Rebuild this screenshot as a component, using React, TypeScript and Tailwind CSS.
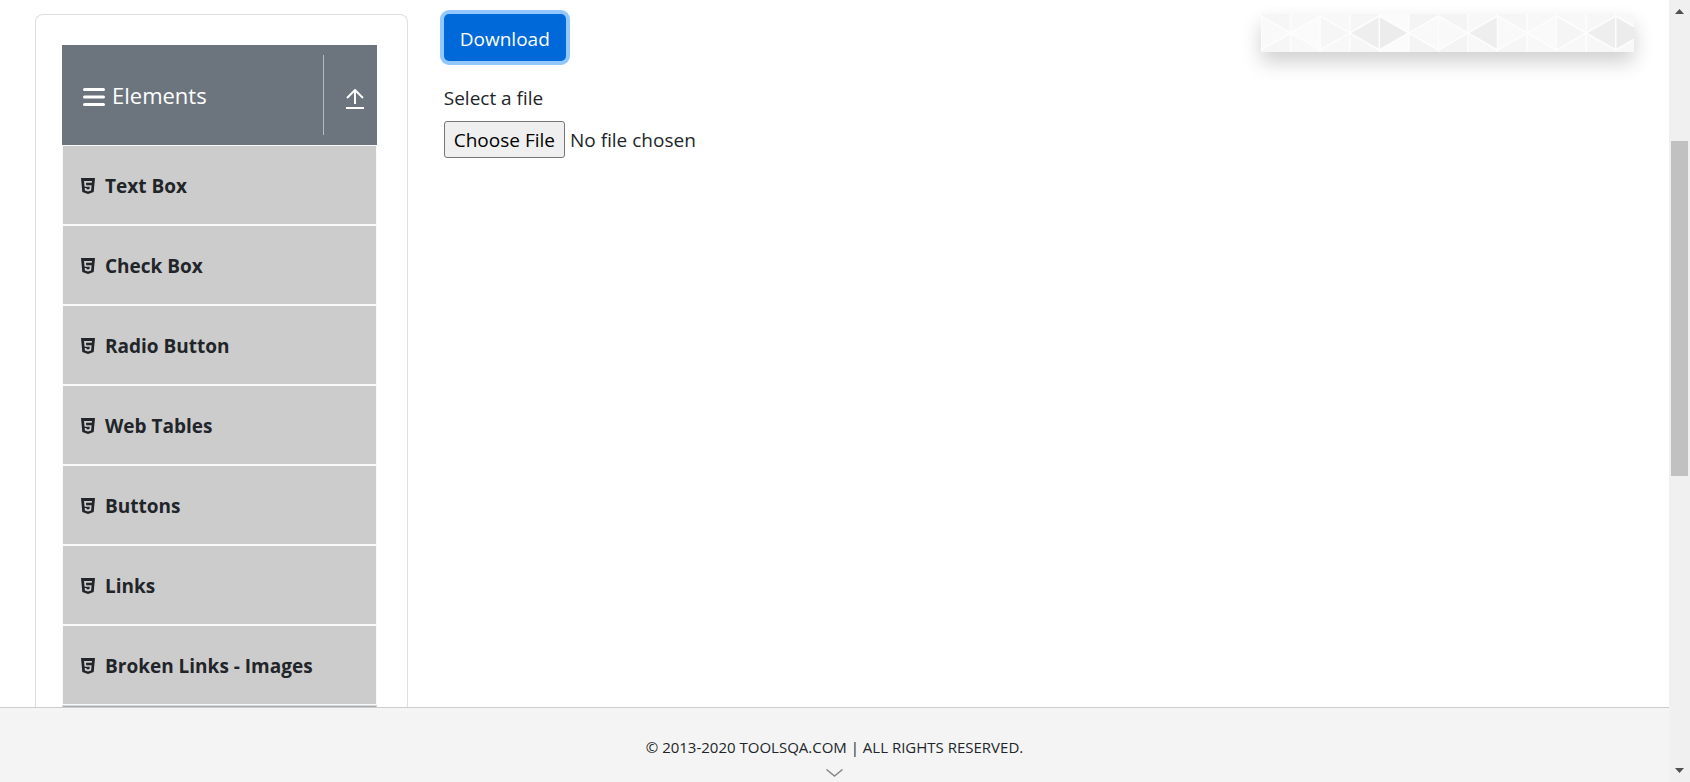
import React from "react";

const items = [
  "Text Box",
  "Check Box",
  "Radio Button",
  "Web Tables",
  "Buttons",
  "Links",
  "Broken Links - Images",
];

function Html5Icon() {
  return (
    <svg viewBox="0 0 16 16" className="h-4 w-4 shrink-0" aria-hidden="true">
      <path
        fill="#212529"
        fillRule="evenodd"
        d="M1 0h14l-1.3 14L8 16l-5.7-2L1 0z M4 3l.6 5.800h5.100l-.2 2.200-1.500.5-1.500-.5-.1-1H4.700l.2 2.400L8 13.500l3.100-1.100.5-5.200H6.200L6 4.800h5.800L12 3z"
      />
    </svg>
  );
}

const STEP = 29.5;

const tiles = [
  { tone: "#f9f9f9", corner: "#f6f6f6" },
  { tone: "#fbfbfb", corner: "#f8f8f8" },
  { tone: "#f6f6f6", corner: "#f8f8f8" },
  { tone: "#eeeeee", corner: "#f6f6f6" },
  { tone: "#ececec", corner: "#fbfbfb" },
  { tone: "#f9f9f9", corner: "#f4f4f4" },
  { tone: "#f9f9f9", corner: "#f4f4f4" },
  { tone: "#eeeeee", corner: "#f8f8f8" },
  { tone: "#f9f9f9", corner: "#f6f6f6" },
  { tone: "#fafafa", corner: "#f8f8f8" },
  { tone: "#f5f5f5", corner: "#f8f8f8" },
  { tone: "#eeeeee", corner: "#f7f7f7" },
  { tone: "#ececec", corner: "#f8f8f8" },
];

function Banner() {
  return (
    <svg
      viewBox="0 0 372 38"
      preserveAspectRatio="none"
      className="block h-[38px] w-full shadow-[0_10px_20px_rgba(0,0,0,0.19)]"
      aria-hidden="true"
    >
      {tiles.map(({ corner }, i) => (
        <rect key={i} x={i * STEP} width={STEP + 0.5} height="38" fill={corner} />
      ))}
      {tiles.map(({ tone }, i) => {
        const x = i * STEP;
        const points =
          i % 2 === 0
            ? `${x},2 ${x},36 ${x + STEP},19`
            : `${x},19 ${x + STEP},2 ${x + STEP},36`;
        return <polygon key={i} points={points} fill={tone} />;
      })}
      {tiles.map((_, i) => {
        const x = i * STEP;
        const [from, to] = i % 2 === 0 ? [2, 19] : [19, 2];
        return (
          <path
            key={i}
            d={`M${x} ${from}L${x + STEP} ${to}M${x} ${38 - from}L${x + STEP} ${38 - to}M${x} 0V38`}
            stroke="#fdfdfd"
            strokeWidth="1.5"
          />
        );
      })}
    </svg>
  );
}

export default function App() {
  return (
    <div className="flex h-screen overflow-hidden bg-white font-['Open_Sans','Noto_Sans',sans-serif] text-[19px] leading-[30px] text-[#212529]">
      <div className="flex min-w-0 flex-1 flex-col">
        <main className="grid min-h-0 flex-1 grid-cols-4 gap-9 overflow-hidden px-[35px] pt-3.5">
          <nav className="rounded-t-lg border border-b-0 border-[#dfdfdf] pt-[30px] pr-[30px] pl-[26px]">
            <div className="flex h-[100px] items-center bg-[#6c757d] text-white">
              <div className="flex flex-1 items-center gap-[7px] pl-[21px] text-[22px]">
                <svg viewBox="0 0 22 20" className="mt-1 h-5 w-[22px]" aria-hidden="true">
                  <path d="M1.5 2.5h19M1.5 10h19M1.5 17.5h19" stroke="#fff" strokeWidth="3" strokeLinecap="round" />
                </svg>
                <span>Elements</span>
              </div>
              <button type="button" aria-label="Collapse Elements" className="flex h-20 w-[54px] items-center border-l border-[#b5babe] pl-[22px]">
                <svg viewBox="0 0 18 20" className="mt-2 h-5 w-[18px]" fill="none" stroke="#fff" strokeWidth="2" aria-hidden="true">
                  <path d="M9 15V2M1 9l8-8 8 8M0 19h18" />
                </svg>
              </button>
            </div>
            <ul>
              {items.map((item) => (
                <li key={item}>
                  <a href="#" className="flex h-20 items-center gap-[9px] border border-[#f8f9fa] bg-[#ccc] pt-0.5 pl-[17px] font-bold">
                    <Html5Icon />
                    {item}
                  </a>
                </li>
              ))}
            </ul>
            <div className="h-20 border border-[#d5d8da] bg-[#a9abad]" />
          </nav>
          <section className="col-span-2">
            <button type="button" className="flex h-[47px] items-center rounded-[5px] bg-[#0069d9] px-4 pt-0.5 text-white ring-4 ring-[#93c8ff]">
              Download
            </button>
            <label htmlFor="file" className="mt-[22px] mb-2 block">
              Select a file
            </label>
            <input
              id="file"
              type="file"
              className="block w-full file:mr-[5px] file:h-[37px] file:rounded-[3px] file:border file:border-solid file:border-[#767676] file:bg-[#efefef] file:px-[9px] file:text-black"
            />
          </section>
          <aside>
            <Banner />
          </aside>
        </main>
        <footer className="flex h-[75px] flex-col items-center border-t border-[#ccc] bg-[#f4f4f4] pt-6 text-[15px]">
          <span>© 2013-2020 TOOLSQA.COM | ALL RIGHTS RESERVED.</span>
          <svg viewBox="0 0 17 8" className="mt-[7px] h-2 w-[17px]" fill="none" stroke="#888" strokeWidth="1.5" aria-hidden="true">
            <path d="M.5.5l8 6.500 8-6.500" />
          </svg>
        </footer>
      </div>
      <div className="flex w-[21px] flex-col items-center justify-between bg-[#f0f0f0] py-[9px]" aria-hidden="true">
        <svg viewBox="0 0 9 5" className="h-[5px] w-[9px]" fill="#505050">
          <path d="M0 5l4.500-5L9 5z" />
        </svg>
        <div className="flex w-full flex-1 flex-col px-0.5 pt-[127px]">
          <div className="h-[335px] bg-[#c1c1c1]" />
        </div>
        <svg viewBox="0 0 9 5" className="h-[5px] w-[9px]" fill="#505050">
          <path d="M0 0l4.500 5L9 0z" />
        </svg>
      </div>
    </div>
  );
}
